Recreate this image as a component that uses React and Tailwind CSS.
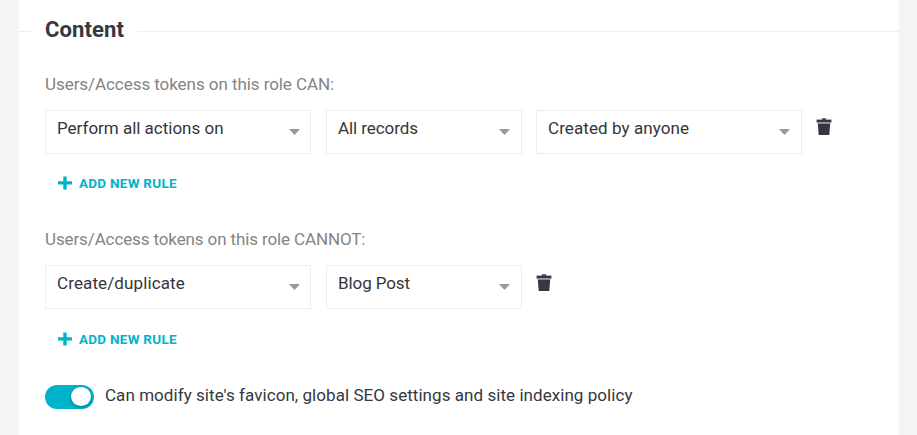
function Select({ label, className, spacing }) {
  return (
    <div className={`flex h-11 shrink-0 items-start justify-between border border-[#eeeeee] bg-white pl-[11px] ${className}`}>
      <span className={`mt-[5px] whitespace-nowrap text-[17px] leading-6 text-[#34363a] ${spacing}`}>{label}</span>
      <svg className="mt-[18px]" width="11" height="6" viewBox="0 0 11 6" fill="#999999" aria-hidden="true">
        <path d="M0 0h11L5.500 6z" />
      </svg>
    </div>
  );
}

function Trash({ className }) {
  return (
    <button type="button" aria-label="Remove rule" className={`h-[18px] w-4 shrink-0 ${className}`}>
      <svg width="16" height="18" viewBox="0 0 16 18" aria-hidden="true">
        <path d="M5.800 0h4.400v2.200H5.800z" fill="#777a80" />
        <path d="M7 1h2v1H7z" fill="#343840" />
        <path d="M.6 1.600h14.800v3H.6z" fill="#343840" />
        <path d="M1.400 4.600h13.200v.9H1.400z" fill="#b9bbbe" />
        <path d="M1.800 5.500h12.400L13.300 17H2.700z" fill="#343840" />
      </svg>
    </button>
  );
}

function AddRule({ className }) {
  return (
    <button type="button" className={`ml-[13px] flex h-5 items-center text-[#00b3cb] ${className}`}>
      <svg width="14" height="14" viewBox="0 0 14 14" fill="currentColor" aria-hidden="true">
        <path d="M5.300.5h3.400v4.800H14v3.200H8.700v5H5.300v-5H0V5.300h5.300z" />
      </svg>
      <span className="-mt-px ml-[7px] whitespace-nowrap text-[13.500px] font-bold leading-5 tracking-[0.26px]">ADD NEW RULE</span>
    </button>
  );
}

export default function App() {
  return (
    <div className="h-[435px] w-[917px] overflow-hidden bg-[#f4f4f4] pl-[19px] pr-[18px] font-['Roboto',sans-serif]">
      <main className="flex h-full flex-col bg-white">
        <div className="mt-[15px] flex h-8 items-center">
          <span className="h-px w-[13px] bg-[#eeeeee]" />
          <h2 className="-mt-0.5 w-[105px] whitespace-nowrap pl-[13px] text-[22px] font-bold leading-8 tracking-[0.13px] text-[#343840]">Content</h2>
          <span className="h-px flex-1 bg-[#eeeeee]" />
        </div>
        <div className="pl-[26px]">
          <p className="mt-[25px] h-6 whitespace-nowrap text-[17px] leading-6 tracking-[-0.06px] text-[#848484]">Users/Access tokens on this role CAN:</p>
          <div className="mt-[14px] flex">
            <Select label="Perform all actions on" className="w-[266px] pr-[10px]" spacing="tracking-[-0.01px]" />
            <Select label="All records" className="ml-[15px] w-[196px] pr-[11px]" spacing="tracking-[-0.07px]" />
            <Select label="Created by anyone" className="ml-[14px] w-[266px] pr-[11px]" spacing="tracking-[0.08px]" />
            <Trash className="ml-[14px] mt-2" />
          </div>
          <AddRule className="mt-[19px]" />
          <p className="mt-[34px] h-6 whitespace-nowrap text-[17px] leading-6 tracking-[-0.12px] text-[#848484]">Users/Access tokens on this role CANNOT:</p>
          <div className="mt-[14px] flex">
            <Select label="Create/duplicate" className="w-[266px] pr-[10px]" spacing="tracking-[0.12px]" />
            <Select label="Blog Post" className="ml-[15px] w-[196px] pr-[11px]" spacing="tracking-[-0.09px]" />
            <Trash className="ml-[14px] mt-[9px]" />
          </div>
          <AddRule className="mt-5" />
          <div className="mt-9 flex h-6 items-center">
            <button type="button" role="switch" aria-checked="true" aria-label="Can modify site settings" className="flex h-6 w-[49px] items-center justify-end rounded-full bg-[#00b3cb] pr-[3.500px]">
              <span className="-mt-px size-[19.500px] rounded-full bg-white shadow-[0_1px_3px_rgba(0,0,0,0.4)]" />
            </button>
            <span className="-mt-1 ml-[11px] whitespace-nowrap text-[17px] leading-6 tracking-[0.055px] text-[#343840]">Can modify site's favicon, global SEO settings and site indexing policy</span>
          </div>
        </div>
      </main>
    </div>
  );
}
